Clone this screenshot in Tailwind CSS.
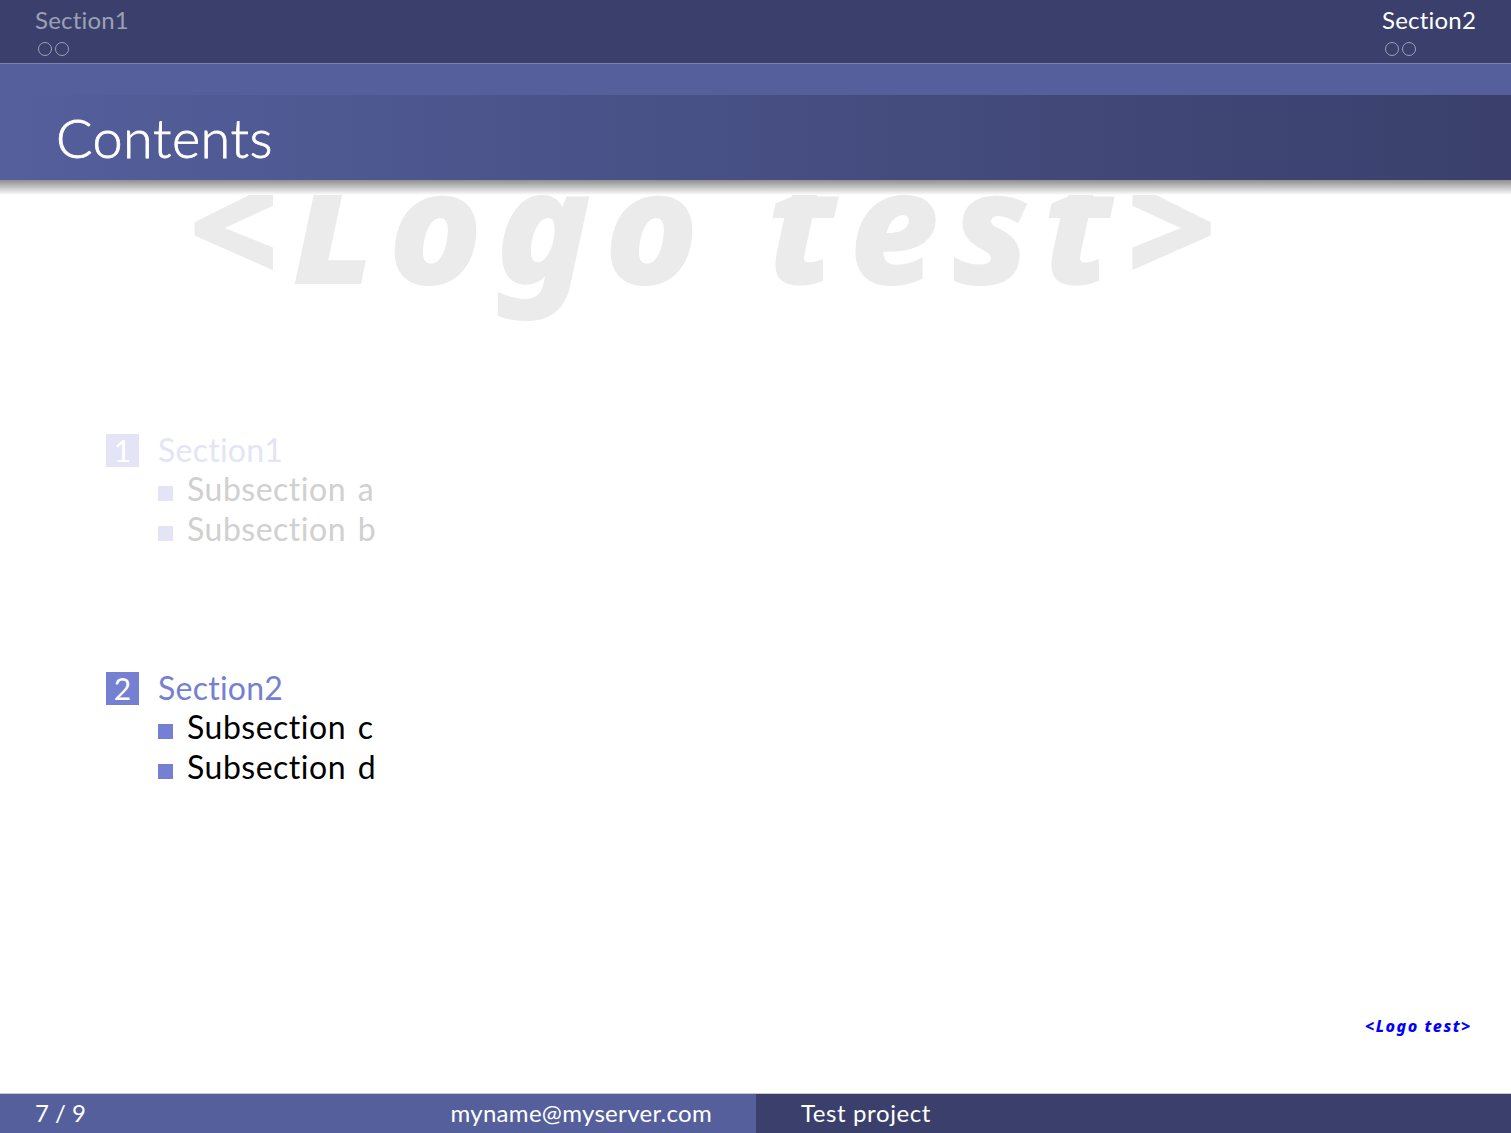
<!DOCTYPE html>
<html lang="en">
<head>
<meta charset="utf-8">
<title>Contents</title>
<script src="https://cdn.jsdelivr.net/npm/@tailwindcss/browser@4"></script>
</head>
<body class="bg-white font-['Lato','Noto_Sans',sans-serif] text-black">
  <div class="relative w-[1511px] h-[1133px] overflow-hidden flex flex-col">

    <!-- section navigation -->
    <header class="h-[64px] bg-[#3a406b] border-b border-[#7c84ad] flex justify-between pl-[35px] pr-[35px] text-[24px] leading-none">
      <div class="flex flex-col">
        <span class="mt-[8px] h-[24px] text-[#9da0b5] tracking-[0.2px]">Section1</span>
        <div class="flex gap-[2.5px] mt-[10px] ml-[3px]">
          <span class="w-[14px] h-[14px] rounded-full border-[1.5px] border-[#9da0b5]"></span>
          <span class="w-[14px] h-[14px] rounded-full border-[1.5px] border-[#9da0b5]"></span>
        </div>
      </div>
      <div class="flex flex-col">
        <span class="mt-[8px] h-[24px] text-white tracking-[0.2px]">Section2</span>
        <div class="flex gap-[2.5px] mt-[10px] ml-[3px]">
          <span class="w-[14px] h-[14px] rounded-full border-[1.5px] border-[#9da0b5]"></span>
          <span class="w-[14px] h-[14px] rounded-full border-[1.5px] border-[#9da0b5]"></span>
        </div>
      </div>
    </header>

    <div class="h-[31px] bg-[#545f9c]"></div>

    <!-- frame title -->
    <div class="h-[85px] bg-gradient-to-r from-[#545f9c] to-[#3a406b] flex items-center pl-[56px]">
      <h1 class="text-[54px] leading-none text-white font-light tracking-[0.5px] [-webkit-text-stroke:0.8px_white]">Contents</h1>
    </div>
    <div class="h-[15px] bg-gradient-to-b from-[#8f8f8f] to-white"></div>

    <!-- watermark, cut off by the title shadow -->
    <div class="absolute left-[180px] top-[195px] w-[1050px] h-[130px] overflow-hidden">
      <span class="absolute left-[8px] top-[-50px] whitespace-nowrap font-['Noto_Sans',sans-serif] font-extrabold italic text-[#ebebeb] text-[156px] leading-none tracking-[14.7px] [-webkit-text-stroke:2px_#ebebeb]">&lt;Logo test&gt;</span>
    </div>

    <!-- table of contents -->
    <main class="relative flex-1 pl-[106px]">
      <section class="pt-[235px]">
        <div class="flex items-center h-[40px] gap-[19px]">
          <span class="w-[33px] h-[33px] bg-[#e3e5f6] text-white text-[30px] leading-none flex items-center justify-center">1</span>
          <span class="text-[32px] leading-none text-[#e3e5f6] tracking-[0.25px]">Section1</span>
        </div>
        <ul class="pl-[52px] text-[32px] leading-none text-[#d0d0d0] tracking-[0.5px] [word-spacing:3px]">
          <li class="flex items-center h-[40px] gap-[14px] pb-[2px]"><span class="w-[15px] h-[15px] bg-[#e3e5f6] translate-y-[4px]"></span>Subsection a</li>
          <li class="flex items-center h-[40px] gap-[14px] pb-[2px]"><span class="w-[15px] h-[15px] bg-[#e3e5f6] translate-y-[4px]"></span>Subsection b</li>
        </ul>
      </section>
      <section class="pt-[118px]">
        <div class="flex items-center h-[40px] gap-[19px]">
          <span class="w-[33px] h-[33px] bg-[#7580d3] text-white text-[30px] leading-none flex items-center justify-center">2</span>
          <span class="text-[32px] leading-none text-[#7580d3] tracking-[0.25px]">Section2</span>
        </div>
        <ul class="pl-[52px] text-[32px] leading-none text-black tracking-[0.5px] [word-spacing:3px]">
          <li class="flex items-center h-[40px] gap-[14px] pb-[2px]"><span class="w-[15px] h-[15px] bg-[#7580d3] translate-y-[4px]"></span>Subsection c</li>
          <li class="flex items-center h-[40px] gap-[14px] pb-[2px]"><span class="w-[15px] h-[15px] bg-[#7580d3] translate-y-[4px]"></span>Subsection d</li>
        </ul>
      </section>
      <span class="absolute left-[1365px] top-[823px] whitespace-nowrap font-['Noto_Sans',sans-serif] font-extrabold italic text-[#0000ff] text-[16px] leading-none tracking-[1.5px]">&lt;Logo test&gt;</span>
    </main>

    <!-- footer -->
    <footer class="h-[40px] border-t border-[#c9c9d2] flex text-[24px] leading-none text-white">
      <div class="w-[756px] bg-[#545f9c] flex items-center justify-between pl-[35px] pr-[44px] pb-[2px]">
        <span>7 / 9</span>
        <span class="tracking-[0.3px]">myname@myserver.com</span>
      </div>
      <div class="flex-1 bg-[#3a406b] flex items-center pl-[45px] pb-[2px]">
        <span class="tracking-[0.6px]">Test project</span>
      </div>
    </footer>
  </div>
</body>
</html>
